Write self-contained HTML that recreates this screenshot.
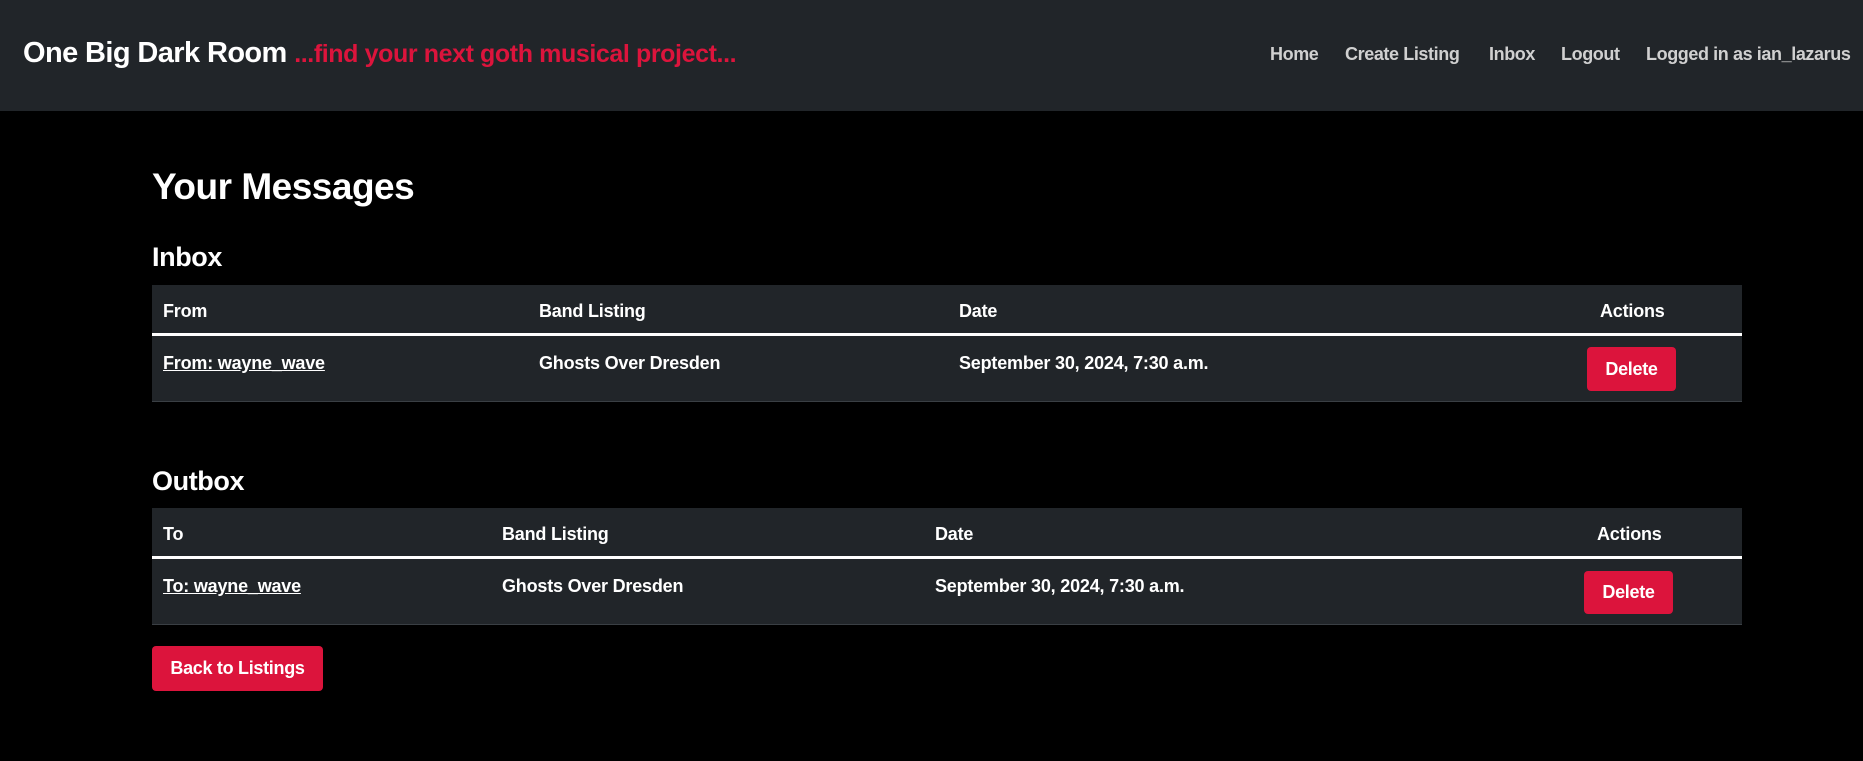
<!DOCTYPE html>
<html><head><meta charset="utf-8"><style>
*{margin:0;padding:0;box-sizing:border-box}
body{width:1863px;height:761px;background:#000;color:#fff;font-family:"Liberation Sans",sans-serif;position:relative;overflow:hidden}
.a{position:absolute;white-space:nowrap}
nav{position:absolute;left:0;top:0;width:1863px;height:111px;background:#212529}
.brand{left:23px;top:37px;font-size:29px;font-weight:bold;letter-spacing:-0.6px}
.tag{color:#dc143c;font-weight:bold;font-size:25px;letter-spacing:-0.4px}
.nl{top:44px;font-size:18px;color:#d0d0d0;font-weight:bold;letter-spacing:-0.4px}
.tbl{position:absolute;left:152px;width:1590px;background:#212529}
.hd{border-bottom:3px solid #fff}
.th{font-weight:bold;font-size:18px;letter-spacing:-0.2px}
.td{font-weight:bold;font-size:18px;letter-spacing:-0.2px}
.btn{position:absolute;background:#dc143c;border-radius:4px;color:#fff;font-weight:bold;font-size:18px;display:flex;align-items:center;justify-content:center;letter-spacing:-0.3px}
u{text-decoration:underline}
</style></head><body>
<nav>
<div class="a brand">One Big Dark Room <span class="tag">...find your next goth musical project...</span></div>
<div class="a nl" style="left:1270px">Home</div>
<div class="a nl" style="left:1345px">Create Listing</div>
<div class="a nl" style="left:1489px">Inbox</div>
<div class="a nl" style="left:1561px">Logout</div>
<div class="a nl" style="left:1646px">Logged in as ian_lazarus</div>
</nav>
<div class="a" style="left:152px;top:166px;font-size:37px;font-weight:bold;letter-spacing:-0.5px">Your Messages</div>
<div class="a" style="left:152px;top:242px;font-size:27px;font-weight:bold;letter-spacing:-0.4px">Inbox</div>
<div class="tbl" style="top:285px;height:117px;border-bottom:1px solid #3a3f44">
<div class="hd" style="height:51px"></div>
<div class="a th" style="left:11px;top:16px">From</div>
<div class="a th" style="left:387px;top:16px">Band Listing</div>
<div class="a th" style="left:807px;top:16px">Date</div>
<div class="a th" style="left:1448px;top:16px">Actions</div>
<div class="a td" style="left:11px;top:68px"><u>From: wayne_wave</u></div>
<div class="a td" style="left:387px;top:68px">Ghosts Over Dresden</div>
<div class="a td" style="left:807px;top:68px">September 30, 2024, 7:30 a.m.</div>
</div>
<div class="btn" style="left:1587px;top:347px;width:89px;height:44px">Delete</div>
<div class="a" style="left:152px;top:466px;font-size:27px;font-weight:bold;letter-spacing:-0.4px">Outbox</div>
<div class="tbl" style="top:508px;height:117px;border-bottom:1px solid #3a3f44">
<div class="hd" style="height:51px"></div>
<div class="a th" style="left:11px;top:16px">To</div>
<div class="a th" style="left:350px;top:16px">Band Listing</div>
<div class="a th" style="left:783px;top:16px">Date</div>
<div class="a th" style="left:1445px;top:16px">Actions</div>
<div class="a td" style="left:11px;top:68px"><u>To: wayne_wave</u></div>
<div class="a td" style="left:350px;top:68px">Ghosts Over Dresden</div>
<div class="a td" style="left:783px;top:68px">September 30, 2024, 7:30 a.m.</div>
</div>
<div class="btn" style="left:1584px;top:571px;width:89px;height:43px">Delete</div>
<div class="btn" style="left:152px;top:646px;width:171px;height:45px">Back to Listings</div>
</body></html>
